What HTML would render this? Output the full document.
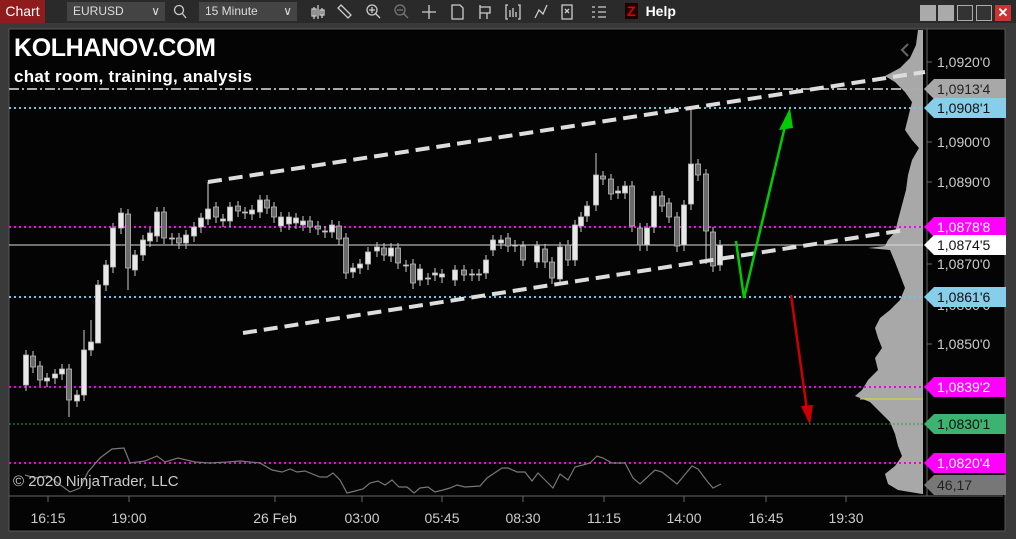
<!DOCTYPE html>
<html><head><meta charset="utf-8"><style>
body{margin:0;width:1016px;height:539px;background:#3a3a3a;overflow:hidden;font-family:"Liberation Sans",sans-serif;position:relative}
#tb{position:absolute;left:0;top:0;width:1016px;height:23px;background:#2a2a2a}
.tab{position:absolute;left:0;top:0;width:45px;height:23px;background:#8e1c1c;color:#fff;font-size:14px;line-height:23px;text-align:center}
.dd{position:absolute;top:2px;height:19px;background:#444;color:#ddd;font-size:12px;line-height:19px;padding-left:6px;box-sizing:border-box}
.wb{position:absolute;top:5px;width:16px;height:16px;background:#aaa}
svg{position:absolute;left:0;top:0}
</style></head><body>
<div id="tb">
<div class="tab">Chart</div>
<div class="dd" style="left:67px;width:98px">EURUSD<span style="position:absolute;right:5px">&#8744;</span></div>
<div class="dd" style="left:199px;width:98px">15 Minute<span style="position:absolute;right:5px">&#8744;</span></div>
<div style="position:absolute;left:625px;top:0;color:#fff;font-weight:bold;font-size:14px;line-height:23px"><span style="color:#d00;background:#200;padding:0 2px;margin-right:8px">Z</span>Help</div>
<div class="wb" style="left:920px"></div><div class="wb" style="left:938px"></div>
<div class="wb" style="left:957px;background:#333;border:1px solid #aaa;width:14px;height:14px"></div>
<div class="wb" style="left:976px;background:#333;border:1px solid #aaa;width:14px;height:14px"></div>
<div class="wb" style="left:995px;background:#c33;color:#fff;font-size:13px;line-height:16px;text-align:center;font-weight:bold">✕</div>
</div>
<svg width="1016" height="539" id="s">
<g stroke="#ccc" fill="none" stroke-width="1.3">
<circle cx="179" cy="10" r="4.5"/><path d="M182 13l4 5"/>
<path d="M314 7v12M312 9h4v7h-4zM318 5v14M322 8v10M320 10h4v5h-4z"/>
<path d="M341 5l10 10-3 3-10-10z"/>
<circle cx="372" cy="10" r="5"/><path d="M375 13l5 5M369 10h6M372 7v6"/>
<circle cx="400" cy="10" r="5" stroke="#777"/><path d="M403 13l5 5M397 10h6" stroke="#777"/>
<path d="M429 5v14M422 12h14"/>
<path d="M452 5h8l3 3v11h-11z"/>
<path d="M480 5v14M480 7h10v6h-10M487 13v6"/>
<path d="M508 5h-2v14h2M518 5h2v14h-2M510 10v7M513 8v9M516 12v5"/>
<path d="M535 18l4-8 4 4 4-9"/>
<path d="M562 5h10v14h-10zM565 9l4 4M569 9l-4 4"/>
<path d="M592 7h3M598 7h8M592 12h3M598 12h8M592 17h3M598 17h8"/>
</g>
<rect x="9" y="29" width="996" height="502" fill="#040404" stroke="#555"/>
<line x1="927" y1="29" x2="927" y2="496" stroke="#666"/>
<line x1="9" y1="496" x2="1003" y2="496" stroke="#666"/>
<polygon fill="#a8a8a8" points="923,30 918,30 916,45 910,58 900,68 885,76 895,82 905,92 912,102 908,118 905,130 912,140 919,148 912,160 908,175 906,190 902,205 898,220 895,232 888,240 885,246 868,248 890,250 895,262 900,275 905,288 900,300 890,310 880,318 875,328 878,338 882,348 875,358 878,370 868,380 862,390 855,396 870,402 880,412 890,422 895,434 898,446 902,456 895,466 885,474 888,484 898,490 922,494 923,494"/>
<g stroke-dasharray="2,3" stroke-width="2">
<line x1="9" y1="108" x2="923" y2="108" stroke="#6cc4e4"/>
<line x1="9" y1="227" x2="923" y2="227" stroke="#f0f"/>
<line x1="9" y1="297" x2="923" y2="297" stroke="#6cc4e4"/>
<line x1="9" y1="387" x2="923" y2="387" stroke="#e0e"/>
<line x1="9" y1="463" x2="923" y2="463" stroke="#e0e"/>
</g>
<line x1="9" y1="424" x2="923" y2="424" stroke="#2a9a5a" stroke-dasharray="2,2"/>
<line x1="9" y1="89" x2="923" y2="89" stroke="#aaa" stroke-width="2" stroke-dasharray="10,3,2,3"/>
<line x1="9" y1="245" x2="923" y2="245" stroke="#ddd"/>
<line x1="860" y1="399" x2="923" y2="399" stroke="#dd3"/>
<g id="c"></g>
<polyline fill="none" stroke="#777" stroke-width="1.2" points="25,475 35,478 48,476 70,492 80,488 88,472 100,458 112,449 124,448 130,463 145,461 157,456 165,462 178,458 195,462 210,463 228,462 240,461 260,463 272,470 282,472 290,469 297,472 305,471 320,477 327,477 333,473 340,480 347,493 355,491 363,489 370,483 378,481 385,485 392,480 399,487 407,487 414,493 420,488 428,487 435,492 443,490 450,488 457,485 465,487 480,486 487,478 502,468 508,468 517,472 525,472 532,481 538,473 545,480 553,488 560,474 568,480 575,467 583,465 590,463 597,456 603,458 612,463 625,463 633,478 640,484 655,470 662,472 677,484 692,466 698,469 707,481 713,488 721,484"/>
<g stroke="#ddd" stroke-width="4" stroke-dasharray="14,7" fill="none">
<line x1="208" y1="182" x2="925" y2="72"/>
<line x1="243" y1="333" x2="905" y2="230"/>
</g>
<line x1="208" y1="182" x2="208" y2="210" stroke="#ddd"/>
<path d="M736 241L744 298L786 122" stroke="#0c0" stroke-width="2.5" fill="none"/>
<path d="M790 108L779 130L793 128z" fill="#0c0"/>
<path d="M791 295L807 410" stroke="#c00" stroke-width="2.5"/>
<path d="M810 425L801 406L813 405z" fill="#c00"/>
<path d="M908 44l-6 6 6 6" stroke="#666" stroke-width="2" fill="none"/>
<g fill="#ccc" font-size="14" font-family="Liberation Sans">
<text x="937" y="67">1,0920'0</text><text x="937" y="147">1,0900'0</text><text x="937" y="187">1,0890'0</text><text x="937" y="269">1,0870'0</text><text x="937" y="310">1,0860'0</text><text x="937" y="349">1,0850'0</text>
</g>
<g stroke="#666"><line x1="927" y1="62" x2="932" y2="62"/><line x1="927" y1="142" x2="932" y2="142"/><line x1="927" y1="182" x2="932" y2="182"/><line x1="927" y1="264" x2="932" y2="264"/><line x1="927" y1="344" x2="932" y2="344"/></g>
<g id="lb" font-size="14" font-family="Liberation Sans"></g>
<g fill="#ccc" font-size="14" font-family="Liberation Sans" text-anchor="middle">
<text x="48" y="523">16:15</text><text x="129" y="523">19:00</text><text x="275" y="523">26 Feb</text><text x="362" y="523">03:00</text><text x="442" y="523">05:45</text><text x="523" y="523">08:30</text><text x="604" y="523">11:15</text><text x="684" y="523">14:00</text><text x="766" y="523">16:45</text><text x="846" y="523">19:30</text>
</g>
<g stroke="#666" id="tk"></g>
<text x="13" y="486" fill="#ccc" font-size="15" font-family="Liberation Sans">© 2020 NinjaTrader, LLC</text>
<text x="14" y="56" fill="#fff" font-size="25" font-weight="bold" font-family="Liberation Sans" textLength="202">KOLHANOV.COM</text>
<text x="14" y="82" fill="#fff" font-size="17" font-weight="bold" font-family="Liberation Sans" textLength="238">chat room, training, analysis</text>
</svg>
<script>
var d=[[26,205,235,1],[33,206,217,0],[40,216,230,0],[47,228,231,1],[55,224,228,1],[62,219,224,1],[69,219,250,0],[77,245,251,1],[84,200,245,1],[91,192,200,1],[98,135,193,1],[106,115,135,1],[113,78,117,1],[121,63,78,1],[128,64,118,0],[135,105,120,1],[143,90,105,1],[150,83,91,1],[157,62,86,1],[164,62,88,0],[172,88,89,1],[179,88,93,0],[186,85,93,1],[194,77,86,1],[201,68,77,1],[208,59,69,1],[216,57,67,0],[223,69,71,1],[230,57,71,1],[238,56,61,0],[245,62,63,1],[252,60,64,1],[260,50,62,1],[267,50,58,0],[274,57,67,0],[281,67,76,1],[289,67,74,1],[296,68,73,1],[303,71,75,1],[310,71,77,0],[318,76,79,0],[325,81,82,1],[332,75,82,1],[339,76,89,0],[346,88,123,0],[353,118,122,1],[360,114,118,1],[368,102,114,1],[377,97,101,1],[384,98,105,0],[391,98,106,1],[398,98,113,0],[406,115,116,1],[413,114,133,0],[420,119,130,1],[428,128,129,1],[435,123,125,1],[442,124,127,1]];
var e=[[455,270,280,1],[464,270,275,0],[472,274,275,1],[479,274,275,1],[486,260,273,1],[493,240,250,1],[501,240,243,1],[508,238,246,0],[515,245,246,1],[523,246,260,0],[537,246,262,1],[545,249,262,0],[552,262,278,0],[560,247,279,1],[568,245,260,0],[575,225,260,1],[581,217,226,1],[587,206,216,1],[596,175,205,1],[603,176,179,0],[611,179,194,0],[618,191,193,1],[625,186,193,1],[632,186,226,0],[640,228,245,0],[647,228,245,1],[654,196,227,1],[662,196,206,0],[669,203,217,0],[677,217,246,0],[684,205,245,1],[691,164,204,1],[698,164,175,0],[706,174,231,0],[713,232,266,0],[720,245,265,1]];
var h='',w={691:110,706:264,596:153,84:330,69:417,128:290,91:320,98:285};
d.forEach(function(c){c[1]+=150;c[2]+=150;});
d.concat(e).forEach(function(c){var x=c[0],t=c[1],b=c[2];var wt=t-5,wb=b+6;if(w[x]){if(w[x]<t)wt=w[x];else wb=w[x];}
h+='<line x1="'+x+'" y1="'+wt+'" x2="'+x+'" y2="'+wb+'" stroke="#ccc"/>';
h+='<rect x="'+(x-2.5)+'" y="'+t+'" width="5" height="'+Math.max(b-t,1)+'" fill="'+(c[3]?'#e8e8e8':'#6a6a6a')+'" stroke="#bbb" stroke-width="0.8"/>';});
document.getElementById('c').innerHTML=h;
var L=[[89,'#a8a8a8','#222',"1,0913'4"],[108,'#87ceeb','#111',"1,0908'1"],[227,'#ff00ff','#fff',"1,0878'8"],[245,'#ffffff','#111',"1,0874'5"],[297,'#87ceeb','#111',"1,0861'6"],[387,'#ff00ff','#fff',"1,0839'2"],[424,'#3cb371','#111',"1,0830'1"],[463,'#ff00ff','#fff',"1,0820'4"],[485,'#777','#222',"46,17"]];
var g='';L.forEach(function(l){var y=l[0];g+='<path d="M924 '+y+'L934 '+(y-10)+'H1006V'+(y+10)+'H934Z" fill="'+l[1]+'"/><text x="937" y="'+(y+5)+'" fill="'+l[2]+'">'+l[3]+'</text>';});
document.getElementById('lb').innerHTML=g;
var t='';[48,129,275,362,442,523,604,684,766,846].forEach(function(x){t+='<line x1="'+x+'" y1="496" x2="'+x+'" y2="502"/>';});document.getElementById('tk').innerHTML=t;
</script>
</body></html>
